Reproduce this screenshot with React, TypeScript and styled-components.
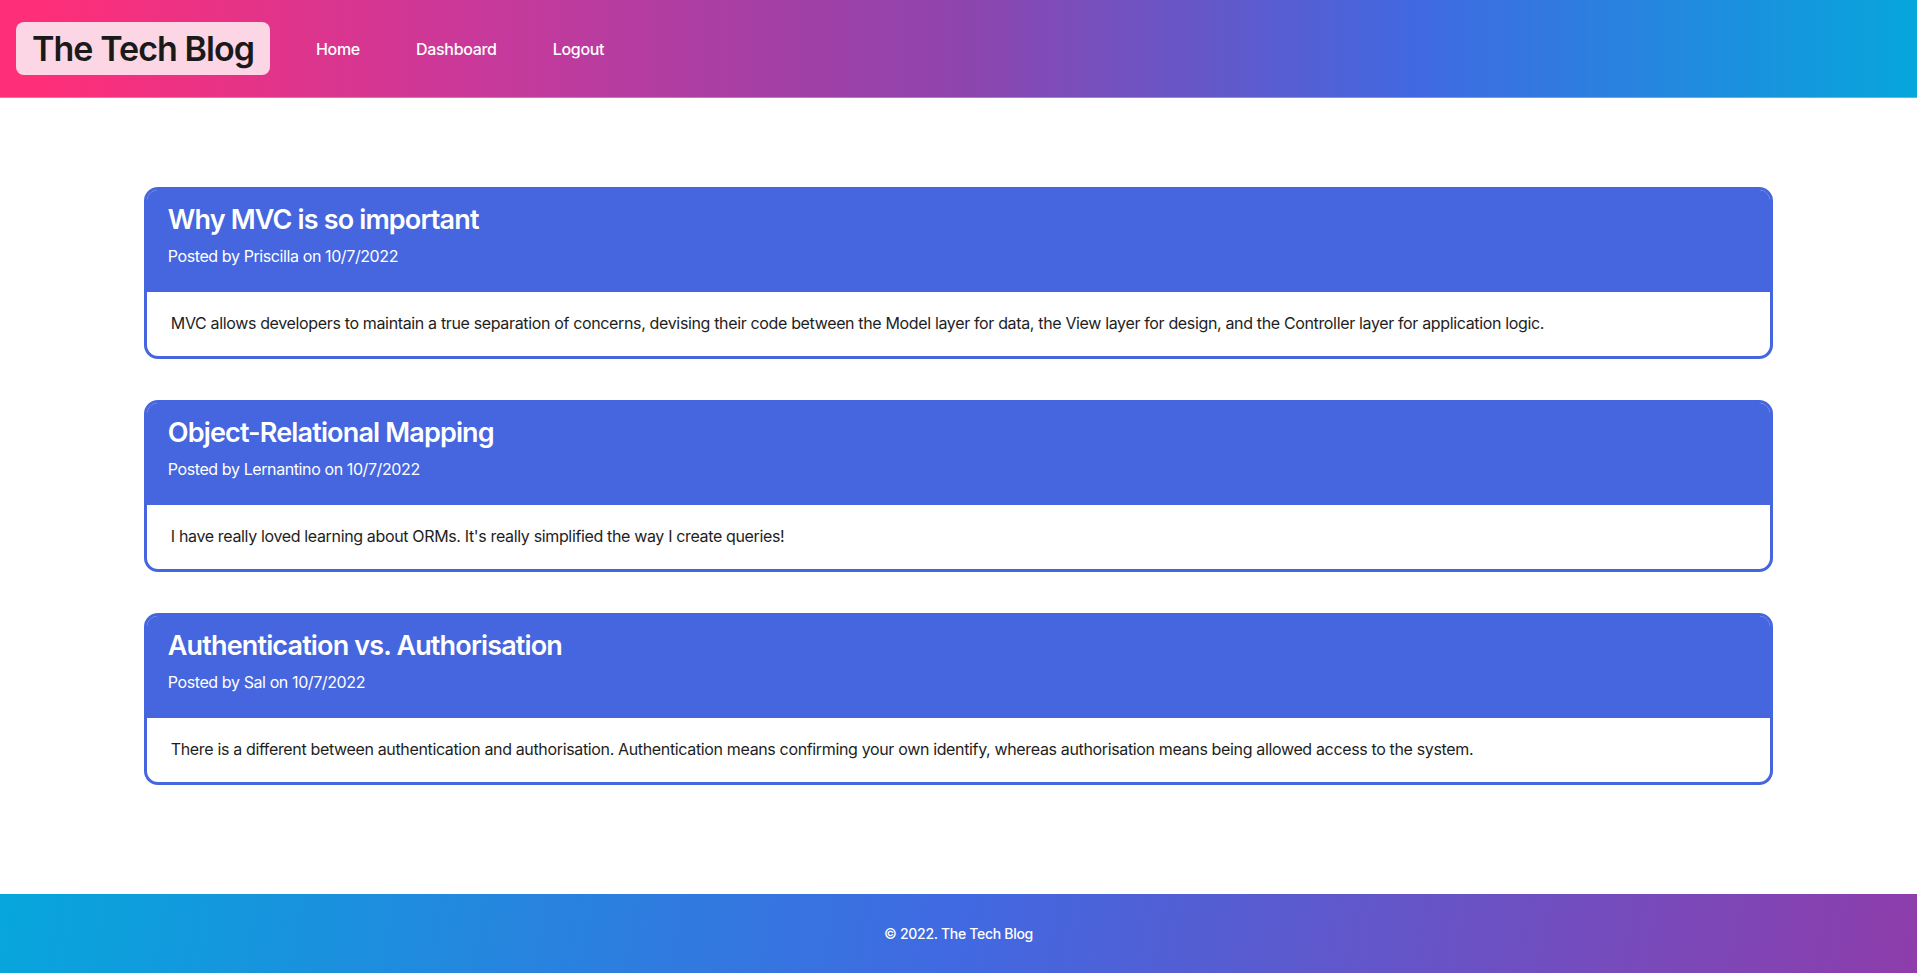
import React from 'react';
import styled, { createGlobalStyle } from 'styled-components';

const GlobalStyle = createGlobalStyle`
  * {
    box-sizing: border-box;
  }

  body {
    margin: 0;
    font-family: Inter, "Noto Sans", sans-serif;
    background: #ffffff;
  }
`;

const Page = styled.div`
  display: flex;
  flex-direction: column;
  min-height: 100vh;
`;

const Header = styled.header`
  display: flex;
  align-items: center;
  height: 98px;
  padding: 0 16px;
  background: linear-gradient(to right, #ff2e78 2%, #c8399a 25%, #8e44ad 50%, #4169e1 74%, #06a6dc 100%);
  border-bottom: 1px solid rgba(255, 255, 255, 0.3);
`;

const Logo = styled.a`
  display: block;
  padding: 6px 16px;
  background: #fcd6e4;
  border-radius: 8px;
  font-size: 34px;
  font-weight: 600;
  line-height: 41px;
  color: #1a1a1a;
  text-decoration: none;
  letter-spacing: -0.95px;
`;

const Nav = styled.nav`
  display: flex;
  align-items: center;
  gap: 56px;
  margin-left: 46px;
`;

const NavLink = styled.a`
  font-size: 16px;
  font-weight: 500;
  line-height: 24px;
  color: #ffffff;
  text-decoration: none;
  letter-spacing: -0.3px;
`;

const Main = styled.main`
  flex: 1;
  display: flex;
  flex-direction: column;
  align-items: center;
  gap: 41px;
  padding: 89px 0 100px;
`;

const Card = styled.article`
  width: 85%;
  border: 3px solid #4566de;
  border-radius: 14px;
  overflow: hidden;
  background: #ffffff;
`;

const CardHeader = styled.div`
  padding: 13px 21px 24px;
  background: #4566de;
  color: #ffffff;
`;

const Title = styled.h2`
  margin: 0 0 7px;
  font-size: 27px;
  font-weight: 600;
  line-height: 34px;
  letter-spacing: -0.85px;
`;

const Meta = styled.p`
  margin: 0;
  font-size: 16px;
  font-weight: 400;
  line-height: 24px;
  letter-spacing: -0.4px;
`;

const CardBody = styled.div`
  padding: 19px 24px 21px;
  font-size: 16px;
  line-height: 24px;
  color: #1e1e1e;
  letter-spacing: -0.35px;
`;

const Footer = styled.footer`
  display: flex;
  align-items: center;
  justify-content: center;
  height: 79px;
  background: linear-gradient(100deg, #06a6dc 0%, #4169e1 50%, #8e3dab 100%);
  color: #ffffff;
  font-size: 14px;
  font-weight: 500;
  letter-spacing: -0.3px;
`;

const posts = [
  {
    title: 'Why MVC is so important',
    author: 'Priscilla',
    date: '10/7/2022',
    body: 'MVC allows developers to maintain a true separation of concerns, devising their code between the Model layer for data, the View layer for design, and the Controller layer for application logic.',
  },
  {
    title: 'Object-Relational Mapping',
    author: 'Lernantino',
    date: '10/7/2022',
    body: "I have really loved learning about ORMs. It's really simplified the way I create queries!",
  },
  {
    title: 'Authentication vs. Authorisation',
    author: 'Sal',
    date: '10/7/2022',
    body: 'There is a different between authentication and authorisation. Authentication means confirming your own identify, whereas authorisation means being allowed access to the system.',
  },
];

const App: React.FC = () => {
  return (
    <Page>
      <GlobalStyle />
      <Header>
        <Logo href="/">The Tech Blog</Logo>
        <Nav>
          <NavLink href="/">Home</NavLink>
          <NavLink href="/dashboard">Dashboard</NavLink>
          <NavLink href="/logout">Logout</NavLink>
        </Nav>
      </Header>
      <Main>
        {posts.map((post) => (
          <Card key={post.title}>
            <CardHeader>
              <Title>{post.title}</Title>
              <Meta>
                Posted by {post.author} on {post.date}
              </Meta>
            </CardHeader>
            <CardBody>{post.body}</CardBody>
          </Card>
        ))}
      </Main>
      <Footer>© 2022. The Tech Blog</Footer>
    </Page>
  );
};

export default App;
